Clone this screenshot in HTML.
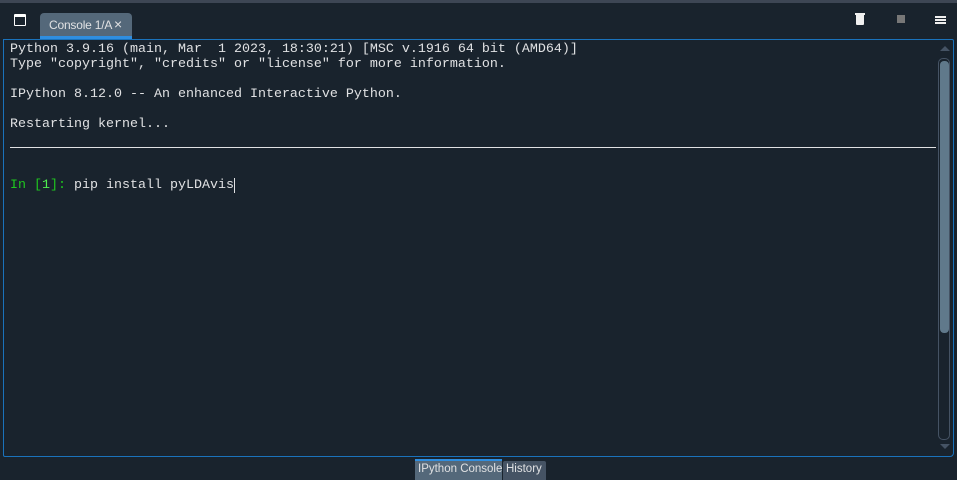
<!DOCTYPE html>
<html><head><style>
body{margin:0;width:957px;height:480px;background:#19232d;position:relative;overflow:hidden;font-family:"Liberation Sans",sans-serif}
.abs{position:absolute}
.mono{font-family:"Liberation Mono",monospace;font-size:13.33px;color:#e0e1e3;white-space:pre;line-height:15px}
</style></head><body>
<div class="abs" style="left:0;top:0;width:957px;height:3px;background:#3d4654"></div>
<div class="abs" style="left:14px;top:14px;width:10px;height:8px;border:1.5px solid #fff;border-top-width:3px;border-radius:1px"></div>
<div class="abs" style="left:40px;top:13px;width:92px;height:26px;background:#54687a;border-radius:4px 4px 0 0"></div>
<div class="abs" style="left:40px;top:36px;width:92px;height:3px;background:#2f8ee0"></div>
<div class="abs" style="left:49px;top:18px;font-size:12px;color:#e0e1e3;letter-spacing:-0.2px">Console 1/A</div>
<div class="abs" style="left:114px;top:16px;font-size:14px;color:#e0e1e3">×</div>
<div class="abs" style="left:856px;top:15px;width:8px;height:10px;background:#f0f0f0;border-radius:0 0 1px 1px"></div>
<div class="abs" style="left:855px;top:13px;width:10px;height:2px;background:#f0f0f0"></div>
<div class="abs" style="left:897px;top:15px;width:8px;height:8px;background:#777"></div>
<div class="abs" style="left:935px;top:16px;width:11px;height:2px;background:#eee;box-shadow:0 3px 0 #eee,0 6px 0 #eee"></div>
<div class="abs" style="left:3px;top:39px;width:949px;height:416px;border:1px solid #1a72bb;border-radius:0 2px 4px 2px"></div>
<div class="abs mono" style="left:10px;top:42px">Python 3.9.16 (main, Mar  1 2023, 18:30:21) [MSC v.1916 64 bit (AMD64)]
Type "copyright", "credits" or "license" for more information.

IPython 8.12.0 -- An enhanced Interactive Python.

Restarting kernel...</div>
<div class="abs" style="left:10px;top:147px;width:926px;height:1px;background:#e0e1e3"></div>
<div class="abs mono" style="left:10px;top:178px"><span style="color:#1fc71f">In [</span><span style="color:#4ff04f">1</span><span style="color:#1fc71f">]:</span> pip install pyLDAvis<span style="border-left:1px solid #e0e1e3"></span></div>
<div class="abs" style="left:940px;top:46px;width:0;height:0;border-left:5px solid transparent;border-right:5px solid transparent;border-bottom:5px solid #455364"></div>
<div class="abs" style="left:938px;top:58px;width:10px;height:380px;border:1px solid #455364;border-radius:5px"></div>
<div class="abs" style="left:940px;top:61px;width:9px;height:272px;background:#60798b;border-radius:4px"></div>
<div class="abs" style="left:940px;top:444px;width:0;height:0;border-left:5px solid transparent;border-right:5px solid transparent;border-top:5px solid #455364"></div>
<div class="abs" style="left:415px;top:459px;width:87px;height:21px;background:#54687a"></div>
<div class="abs" style="left:415px;top:459px;width:87px;height:2px;background:#2f8ee0"></div>
<div class="abs" style="left:418px;top:463px;font-size:11.5px;color:#e0e1e3">IPython Console</div>
<div class="abs" style="left:503px;top:461px;width:43px;height:19px;background:#455364;border-radius:2px 2px 0 0"></div>
<div class="abs" style="left:506px;top:463px;font-size:11.5px;color:#e0e1e3">History</div>
</body></html>
